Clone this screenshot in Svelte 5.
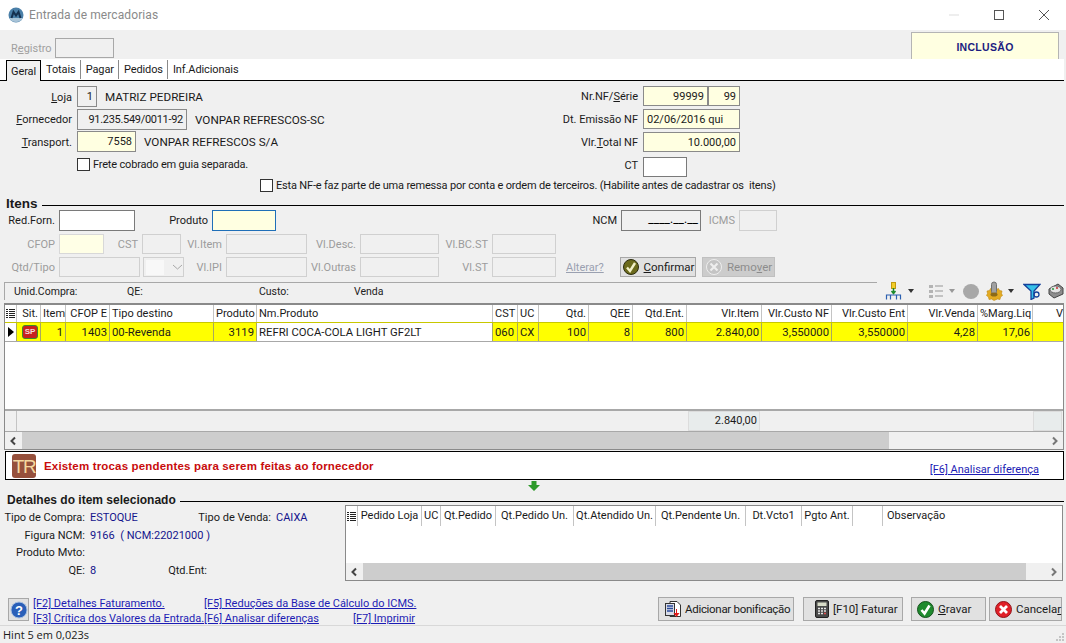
<script lang="ts">
	const itemCols = [
		{ h: 'Sit.', v: '', cls: 'r' },
		{ h: 'Item', v: '1', cls: 'r' },
		{ h: 'CFOP E', v: '1403', cls: 'r' },
		{ h: 'Tipo destino', v: '00-Revenda', cls: '' },
		{ h: 'Produto', v: '3119', cls: 'r' },
		{ h: 'Nm.Produto', v: 'REFRI COCA-COLA LIGHT GF2LT', cls: 'focus' },
		{ h: 'CST', v: '060', cls: '' },
		{ h: 'UC', v: 'CX', cls: '' },
		{ h: 'Qtd.', v: '100', cls: 'r' },
		{ h: 'QEE', v: '8', cls: 'r' },
		{ h: 'Qtd.Ent.', v: '800', cls: 'r' },
		{ h: 'Vlr.Item', v: '2.840,00', cls: 'r' },
		{ h: 'Vlr.Custo NF', v: '3,550000', cls: 'r' },
		{ h: 'Vlr.Custo Ent', v: '3,550000', cls: 'r' },
		{ h: 'Vlr.Venda', v: '4,28', cls: 'r' },
		{ h: '%Marg.Liq', v: '17,06', cls: 'r' },
		{ h: 'V', v: '', cls: 'last' }
	];

	const detailCols = [
		'Pedido Loja',
		'UC',
		'Qt.Pedido',
		'Qt.Pedido Un.',
		'Qt.Atendido Un.',
		'Qt.Pendente Un.',
		'Dt.Vcto1',
		'Pgto Ant.',
		'',
		'Observação'
	];
</script>

{#snippet colIcon()}
	<svg class="col-icon" width="9" height="11" viewBox="0 0 9 11">
		<path d="M0 1.5h2M3 1.5h6M0 3.5h2M3 3.5h6M0 5.5h2M3 5.5h6M0 7.5h2M3 7.5h6M0 9.5h2M3 9.5h6" stroke="#222" fill="none" />
	</svg>
{/snippet}

{#snippet scrollbar(cls: string)}
	<div class="scroll {cls}">
		<svg class="arrow" width="17" height="16" viewBox="0 0 17 16"><path d="M10 4.5 6.5 8l3.5 3.5" fill="none" stroke="#444" stroke-width="2" /></svg>
		<div class="thumb"></div>
		<svg class="arrow" width="17" height="16" viewBox="0 0 17 16"><path d="M7 4.5 10.5 8 7 11.5" fill="none" stroke="#777" stroke-width="2" /></svg>
	</div>
{/snippet}

<div class="window">
	<header class="titlebar">
		<svg width="16" height="16" viewBox="0 0 16 16">
			<circle cx="8" cy="8" r="7.5" fill="#4a7fa8" />
			<path d="M1 11c2 3 4 4 7 4s5-1 7-4z" fill="#a9c4d8" />
			<path d="M3.5 11 5.5 5 8 8.5 10.5 5l2 6" fill="none" stroke="#14304f" stroke-width="2" />
		</svg>
		<span class="title">Entrada de mercadorias</span>
		<div class="winbtns">
			<svg width="12" height="12" viewBox="0 0 12 12"><path d="M1 6h10" stroke="#ddd" /></svg>
			<svg width="12" height="12" viewBox="0 0 12 12"><rect x="1.5" y="1.5" width="9" height="9" fill="none" stroke="#555" /></svg>
			<svg width="12" height="12" viewBox="0 0 12 12"><path d="M1 1l10 10M11 1 1 11" stroke="#555" /></svg>
		</div>
	</header>

	<div class="topbar">
		<span class="label-off">R<u>e</u>gistro</span>
		<div class="f off reg"></div>
		<div class="mode">INCLUSÃO</div>
	</div>

	<nav class="tabs">
		<span class="tab active">Geral</span>
		<span class="tab">Totais</span>
		<span class="tab">Pagar</span>
		<span class="tab">Pedidos</span>
		<span class="tab last">Inf.Adicionais</span>
	</nav>

	<section class="head">
		<div class="head-left">
			<div class="hrow">
				<span class="hl"><u>L</u>oja</span>
				<div class="f ro loja r">1</div>
				<span class="hv">MATRIZ PEDREIRA</span>
			</div>
			<div class="hrow">
				<span class="hl"><u>F</u>ornecedor</span>
				<div class="f ro forn r">91.235.549/0011-92</div>
				<span class="hv">VONPAR REFRESCOS-SC</span>
			</div>
			<div class="hrow">
				<span class="hl"><u>T</u>ransport.</span>
				<div class="f req transp r">7558</div>
				<span class="hv">VONPAR REFRESCOS S/A</span>
			</div>
			<label class="check frete"><span class="box"></span>Frete cobrado em guia separada.</label>
		</div>
		<div class="head-right">
			<div class="nrow">
				<span class="nl">Nr.NF/<u>S</u>érie</span>
				<div class="f req nf r">99999</div>
				<div class="f req serie r">99</div>
			</div>
			<div class="nrow">
				<span class="nl">Dt. Emissão NF</span>
				<div class="f req full">02/06/2016 qui</div>
			</div>
			<div class="nrow">
				<span class="nl">Vlr.<u>T</u>otal NF</span>
				<div class="f req full r">10.000,00</div>
			</div>
			<div class="nrow">
				<span class="nl">CT</span>
				<div class="f ct"></div>
			</div>
		</div>
	</section>
	<label class="check remessa"><span class="box"></span>Esta NF-e faz parte de uma remessa por conta e ordem de terceiros. (Habilite antes de cadastrar os&nbsp; itens)</label>

	<div class="section-title items-title"><strong>Itens</strong><i></i></div>

	<div class="irow red">
		<span class="il">Red.Forn.</span><div class="f"></div>
		<span class="il">Produto</span><div class="f req focusf"></div>
		<span class="il">NCM</span><div class="f mask">____.__.__</div>
		<span class="il dis">ICMS</span><div class="f off"></div>
	</div>
	<div class="irow cfop">
		<span class="il dis">CFOP</span><div class="f off-y"></div>
		<span class="il dis">CST</span><div class="f off"></div>
		<span class="il dis">Vl.Item</span><div class="f off"></div>
		<span class="il dis">Vl.Desc.</span><div class="f off"></div>
		<span class="il dis">Vl.BC.ST</span><div class="f off"></div>
	</div>
	<div class="irow qtd">
		<span class="il dis">Qtd/Tipo</span><div class="f off"></div>
		<span></span>
		<div class="f off combo">
			<i></i>
			<svg width="11" height="6" viewBox="0 0 11 6"><path d="M1 1l4.500 4L10 1" fill="none" stroke="#a8a8a8" /></svg>
		</div>
		<span class="il dis">Vl.IPI</span><div class="f off"></div>
		<span class="il dis">Vl.Outras</span><div class="f off"></div>
		<span class="il dis">Vl.ST</span><div class="f off"></div>
		<span class="alterar">Alterar?</span>
		<button class="btn small">
			<svg width="18" height="18" viewBox="0 0 18 18">
				<circle cx="9" cy="9" r="7.500" fill="#6b6a1c" stroke="#2c2c10" />
				<path d="M5 9.500 8 13l5-8" fill="none" stroke="#f2f0c8" stroke-width="2.400" />
			</svg>
			<span><u>C</u>onfirmar</span>
		</button>
		<button class="btn small disabled">
			<svg width="18" height="18" viewBox="0 0 18 18">
				<circle cx="9" cy="9" r="7.500" fill="#c4c4c4" stroke="#eee" />
				<path d="M5.500 5.500l7 7m0-7-7 7" stroke="#eee" stroke-width="2.200" />
			</svg>
			<span>Remo<u>v</u>er</span>
		</button>
	</div>

	<div class="infobar">
		<div class="info">
			<span class="i1">Unid.Compra:</span>
			<span class="i2">QE:</span>
			<span class="i3">Custo:</span>
			<span class="i4">Venda</span>
		</div>
		<div class="tools">
			<svg class="t1" width="18" height="18" viewBox="0 0 18 18">
				<rect x="6.500" y="0.500" width="4" height="6" fill="#f3cd28" stroke="#c09a10" />
				<path d="M8.500 6v5M6.500 9l2 2.500 2-2.500" fill="none" stroke="#1c8a2c" stroke-width="1.500" />
				<path d="M1.500 17.500V13h14v4.500M5.500 17.500V13M11.500 17.500V13" fill="none" stroke="#2a5fb0" stroke-width="1.200" />
			</svg>
			<i class="caret"></i>
			<svg class="t2" width="16" height="16" viewBox="0 0 16 16">
				<path d="M1 2h4v3H1zM1 7h4v3H1zM1 12h4v3H1z" fill="#b4b4b4" />
				<path d="M7 3h8M7 8h8M7 13h8" stroke="#b4b4b4" stroke-width="1.600" />
			</svg>
			<i class="caret light"></i>
			<span class="dot"></span>
			<svg class="t3" width="18" height="20" viewBox="0 0 18 20">
				<path d="M9 7l2 1.500 2.500-1 1 2 2.500.5-.5 2.500 1 2-2 1.500-.5 2.500-2.500-.5L9 19.500 6.500 18 4 18.500 3.500 16l-2-1.500 1-2L2 10l2.500-.5 1-2 2 1z" fill="#e3ab22" stroke="#c08a14" stroke-width=".6" />
				<rect x="6.500" y="1" width="5" height="12" rx="2.500" fill="#a0a0a0" stroke="#707070" />
				<ellipse cx="9" cy="13.500" rx="3.500" ry="2" fill="#8c6a18" />
			</svg>
			<i class="caret"></i>
			<svg class="t4" width="18" height="17" viewBox="0 0 18 17">
				<path d="M1 1.500h16L11 8v7l-3 1.500V8z" fill="#35c0e8" stroke="#14409a" stroke-width="1.300" />
				<circle cx="13.500" cy="11.500" r="2.500" fill="none" stroke="#14409a" stroke-width="1.300" />
			</svg>
			<svg class="t5" width="16" height="16" viewBox="0 0 16 16">
				<path d="M1 6 10 1l5 4v6l-9 4-5-4z" fill="#8d8d8d" stroke="#444" />
				<ellipse cx="7.500" cy="6.500" rx="5.500" ry="3.500" fill="#e4e4e4" stroke="#666" />
				<circle cx="5" cy="6" r="1" fill="#2a9a3a" />
				<circle cx="9" cy="5" r="1" fill="#c83030" />
			</svg>
		</div>
	</div>

	<div class="grid">
		<div class="grow ghead">
			<div class="gc mark">{@render colIcon()}</div>
			{#each itemCols as c}
				<div class="gc {c.cls === 'focus' ? '' : c.cls}">{c.h}</div>
			{/each}
		</div>
		<div class="grow gdata">
			<div class="gc mark white">
				<svg width="6" height="10" viewBox="0 0 6 10"><path d="M0 0l6 5-6 5z" fill="#000" /></svg>
			</div>
			{#each itemCols as c, i}
				<div class="gc {c.cls}">
					{#if i === 0}
						<span class="sp">SP</span>
					{:else}
						{c.v}
					{/if}
				</div>
			{/each}
		</div>
		<div class="gempty"></div>
		<div class="gfoot">
			<i class="fmark"></i>
			<span class="ftotal">2.840,00</span>
			<span class="fend"></span>
		</div>
		{@render scrollbar('main')}
	</div>

	<div class="banner">
		<span class="tr">TR</span>
		<strong>Existem trocas pendentes para serem feitas ao fornecedor</strong>
		<a class="lnk" href="#f6">[F6] Analisar diferença</a>
	</div>

	<div class="splitter">
		<svg width="12" height="10" viewBox="0 0 12 10"><path d="M3.500 0h5v4H12L6 10 0 4h3.500z" fill="#2e9a2a" /></svg>
	</div>

	<div class="section-title detail-title"><strong>Detalhes do item selecionado</strong><i></i></div>

	<section class="detail">
		<div class="dleft">
			<div class="drow"><span class="dl">Tipo de Compra:</span><span class="dv w1">ESTOQUE</span><span class="dl2">Tipo de Venda:</span><span class="dv">CAIXA</span></div>
			<div class="drow"><span class="dl">Figura NCM:</span><span class="dv">9166&nbsp; ( NCM:22021000 )</span></div>
			<div class="drow"><span class="dl">Produto Mvto:</span></div>
			<div class="drow"><span class="dl">QE:</span><span class="dv w1">8</span><span class="dl2">Qtd.Ent:</span></div>
		</div>
		<div class="dgrid">
			<div class="dhead">
				<div class="gc mark">{@render colIcon()}</div>
				{#each detailCols as c}
					<div class="gc">{c}</div>
				{/each}
			</div>
			<div class="dbody"></div>
			{@render scrollbar('sub')}
		</div>
	</section>

	<footer class="actions">
		<button class="help" aria-label="Ajuda">
			<svg width="18" height="18" viewBox="0 0 18 18">
				<circle cx="9" cy="9" r="8" fill="#2a5fb8" stroke="#a8c0e0" />
				<text x="9" y="13.500" text-anchor="middle" font-size="13" font-weight="700" font-family="Liberation Sans" fill="#fff">?</text>
			</svg>
		</button>
		<div class="links">
			<a class="lnk" href="#f2">[F2] Detalhes Faturamento.</a>
			<a class="lnk span" href="#f5">[F5] Reduções da Base de Cálculo do ICMS.</a>
			<a class="lnk" href="#f3">[F3] Crítica dos Valores da Entrada.</a>
			<a class="lnk" href="#f6">[F6] Analisar diferenças</a>
			<a class="lnk" href="#f7">[F7] Imprimir</a>
		</div>
		<div class="buttons">
			<button class="btn b1">
				<svg width="17" height="18" viewBox="0 0 17 18">
					<path d="M5 1.500h7l3.500 3.500v11.500H5z" fill="#fff" stroke="#333" />
					<rect x="0.500" y="3.500" width="9" height="12" fill="#d8dce8" stroke="#333" />
					<path d="M2 6h6M2 8.500h6M2 11h6" stroke="#2a4a9a" stroke-width="1.400" />
					<path d="M12 9v4h2.500L11.500 17l-3-4H11V9z" fill="#e01818" />
				</svg>
				<span>Adicionar bonificação</span>
			</button>
			<button class="btn b2">
				<svg width="14" height="18" viewBox="0 0 14 18">
					<rect x="0.500" y="0.500" width="13" height="17" rx="1.500" fill="#4a4a4a" stroke="#222" />
					<rect x="2.500" y="2.500" width="9" height="3.500" fill="#d8dcc8" />
					<path d="M3 8.500h2M6 8.500h2M9 8.500h2M3 11h2M6 11h2M9 11h2M3 13.500h2M6 13.500h2" stroke="#e8e8e8" stroke-width="1.400" />
					<path d="M9 13.500h2" stroke="#e05050" stroke-width="1.400" />
				</svg>
				<span>[F10] Faturar</span>
			</button>
			<button class="btn b3">
				<svg width="17" height="17" viewBox="0 0 17 17">
					<circle cx="8.500" cy="8.500" r="8" fill="#1f8a2e" stroke="#14501c" />
					<path d="M4.500 9 7.500 12.500 12.500 4.500" fill="none" stroke="#fff" stroke-width="2.600" />
				</svg>
				<span><u>G</u>ravar</span>
			</button>
			<button class="btn b4">
				<svg width="17" height="17" viewBox="0 0 17 17">
					<circle cx="8.500" cy="8.500" r="8" fill="#e02028" stroke="#90141a" />
					<path d="M5 5l7 7m0-7-7 7" stroke="#fff" stroke-width="2.800" />
				</svg>
				<span>Cancela<u>r</u></span>
			</button>
		</div>
	</footer>

	<div class="status">
		Hint 5 em 0,023s
		<svg class="grip" width="10" height="10" viewBox="0 0 10 10"><path d="M7 1h2v2H7zM4 4h2v2H4zM7 4h2v2H7zM1 7h2v2H1zM4 7h2v2H4zM7 7h2v2H7z" fill="#c4c4c4" /></svg>
	</div>
</div>

<style>
	:global(body) {
		margin: 0;
		background: #f0f0f0;
	}

	.window {
		width: 1066px;
		height: 643px;
		overflow: hidden;
		display: flex;
		flex-direction: column;
		background: #f0f0f0;
		font-family: Roboto, 'Liberation Sans', Arial, sans-serif;
		font-size: 11px;
		color: #1a1a1a;
	}

	u {
		text-underline-offset: 1px;
	}

	.titlebar {
		height: 30px;
		flex: none;
		background: #fff;
		display: flex;
		align-items: center;
		padding-left: 8px;
		gap: 5px;
	}

	.title {
		font-size: 12px;
		color: #8a8a8a;
		letter-spacing: 0.1px;
	}

	.winbtns {
		margin-left: auto;
		display: flex;
		gap: 33px;
		padding-right: 16px;
	}

	.topbar {
		height: 29px;
		flex: none;
		display: flex;
		align-items: flex-end;
		padding-left: 11px;
	}

	.label-off {
		color: #a0a0a0;
		width: 44px;
		align-self: center;
		padding-top: 7px;
	}

	.f {
		box-sizing: border-box;
		height: 21px;
		background: #fff;
		border: 1px solid #7a7a7a;
		padding: 0 3px;
		line-height: 19px;
		white-space: nowrap;
		overflow: hidden;
	}

	.f.r {
		text-align: right;
	}

	.f.off {
		background: #f0f0f0;
		border-color: #d0d0d0;
	}

	.f.off-y {
		background: #ffffe6;
		border-color: #d8d8d8;
	}

	.f.ro {
		background: #f0f0f0;
		border-color: #8a8a8a;
	}

	.f.req {
		background: #ffffe1;
		border-color: #8a8a8a;
	}

	.f.reg {
		width: 59px;
		height: 20px;
		margin-bottom: 1px;
		border-color: #a8a8a8;
	}

	.mode {
		box-sizing: border-box;
		margin-left: auto;
		margin-right: 7px;
		width: 148px;
		height: 27px;
		background: #ffffe1;
		border: 1px solid #b4b4b4;
		border-bottom: 0;
		color: #1c1c80;
		font-family: 'Liberation Sans', Arial, sans-serif;
		font-size: 10.500px;
		font-weight: 700;
		letter-spacing: 0.3px;
		text-align: center;
		line-height: 29px;
	}

	.tabs {
		box-sizing: border-box;
		height: 22px;
		flex: none;
		width: 1064px;
		background: #fff;
		border-bottom: 1px solid #000;
		display: flex;
		align-items: flex-end;
		padding-left: 6px;
		letter-spacing: -0.1px;
	}

	.tab {
		height: 19px;
		line-height: 20px;
		padding: 0 4px 0 5px;
		margin-bottom: 1px;
		border-right: 1px solid #8a8a8a;
	}

	.tab.last {
		border-right: 0;
	}

	.tab.active {
		box-sizing: border-box;
		height: 21px;
		width: 35px;
		margin-bottom: -1px;
		background: #f0f0f0;
		border: 1px solid #000;
		border-bottom: 0;
		padding: 0 0 0 4px;
		line-height: 22px;
	}

	.head {
		height: 97px;
		flex: none;
		box-sizing: border-box;
		padding-top: 5px;
		display: flex;
	}

	.head-left {
		width: 643px;
		display: flex;
		flex-direction: column;
	}

	.hrow {
		height: 21px;
		display: flex;
		align-items: center;
		margin-bottom: 1.500px;
	}

	.hl {
		width: 72px;
		margin-right: 5px;
		padding-top: 1px;
		text-align: right;
	}

	.hv {
		margin-left: 8px;
		padding-top: 1px;
		font-size: 11.700px;
	}

	.f.loja {
		width: 20px;
	}

	.f.forn {
		width: 110px;
		letter-spacing: -0.3px;
	}

	.f.transp {
		width: 59px;
	}

	.check {
		display: flex;
		align-items: center;
		gap: 3px;
		height: 14px;
		letter-spacing: -0.18px;
	}

	.box {
		box-sizing: border-box;
		width: 13px;
		height: 13px;
		background: #fff;
		border: 1px solid #333;
	}

	.frete {
		margin: 4px 0 0 77px;
	}

	.remessa {
		margin-left: 260px;
		flex: none;
	}

	.head-right {
		display: flex;
		flex-direction: column;
		gap: 3px;
	}

	.nrow {
		height: 20px;
		display: flex;
		align-items: center;
		position: relative;
	}

	.nl {
		position: absolute;
		right: 100%;
		margin-right: 5px;
		white-space: nowrap;
	}

	.f.nf {
		width: 66px;
		height: 20px;
		border-right-width: 2px;
	}

	.f.serie {
		width: 31px;
		height: 20px;
		border-left: 0;
	}

	.f.full {
		width: 97px;
		height: 20px;
	}

	.f.ct {
		width: 44px;
		height: 20px;
		margin-top: 4px;
	}

	.section-title {
		display: flex;
		flex: none;
		align-items: center;
		gap: 4px;
		box-sizing: border-box;
		font-family: 'Liberation Sans', Arial, sans-serif;
	}

	.section-title i {
		flex: 1;
		height: 1px;
		background: #000;
		margin-right: 2px;
		margin-top: 3px;
	}

	.items-title {
		height: 14px;
		margin-top: 4px;
		padding-left: 6px;
		padding-top: 1px;
		font-size: 13.500px;
	}

	.irow {
		display: grid;
		flex: none;
		height: 20px;
		align-items: center;
	}

	.il {
		text-align: right;
		padding-right: 4px;
		white-space: nowrap;
	}

	.dis {
		color: #9c9c9c;
	}

	.irow .f {
		height: 100%;
	}

	.red {
		height: 21px;
		grid-template-columns: 59px 76px 77px 64px 345px 80px 38px 38px;
	}

	.focusf {
		border-color: #1f6fb8 !important;
	}

	.mask {
		text-align: right;
		color: #000;
		font-size: 12px;
		line-height: 16px;
		padding-right: 2px;
		border-color: #7a7a7a;
		background: #f0f0f0;
	}

	.cfop {
		margin-top: 3px;
		grid-template-columns: 59px 45px 38px 39px 45px 81px 53px 79px 53px 64px;
	}

	.qtd {
		margin-top: 3px;
		grid-template-columns: 59px 81px 3px 41px 42px 81px 53px 79px 53px 64px 64px 76px 73px;
	}

	.combo {
		display: flex;
		align-items: center;
		padding: 0;
	}

	.combo i {
		width: 18px;
		height: 15px;
		margin-left: 2px;
		background: #f8f8f8;
	}

	.combo svg {
		margin-left: 8px;
	}

	.alterar {
		color: #9aa0b0;
		text-decoration: underline;
		padding-left: 10px;
	}

	.btn {
		box-sizing: border-box;
		height: 24px;
		padding: 0;
		display: flex;
		align-items: center;
		justify-content: center;
		gap: 4px;
		background: #e1e1e1;
		border: 1px solid #a8a8a8;
		font: inherit;
		color: #1a1a1a;
		white-space: nowrap;
	}

	.btn svg {
		flex: none;
	}

	.btn.small {
		height: 20px;
		font-size: 11.500px;
	}

	.btn.small + .btn.small {
		margin-left: 6px;
		width: 73px;
	}

	.btn.disabled {
		background: #cccccc;
		color: #8c8c8c;
		border-color: #c0c0c0;
	}

	.infobar {
		display: flex;
		flex: none;
		height: 18px;
		margin: 5px 0 3px 4px;
	}

	.info {
		box-sizing: border-box;
		width: 873px;
		border: 1px solid #a8a8a8;
		border-width: 1px 0 0 1px;
		display: flex;
		align-items: center;
		font-size: 10.500px;
		color: #222;
	}

	.i1 {
		margin-left: 9px;
		width: 113px;
	}

	.i2 {
		width: 132px;
	}

	.i3 {
		width: 95px;
	}

	.tools {
		display: flex;
		align-items: center;
		padding-left: 8px;
	}

	.caret {
		width: 0;
		height: 0;
		margin: 0 8px 0 5px;
		border: 3px solid transparent;
		border-top: 4px solid #333;
		border-bottom: 0;
	}

	.caret.light {
		border-top-color: #999;
	}

	.t2 {
		margin-left: 6px;
	}

	.dot {
		width: 16px;
		height: 15px;
		border-radius: 50%;
		background: #a8a8a8;
		margin-right: 6px;
	}

	.t4 {
		margin: 0 7px 0 1px;
	}

	.grid {
		box-sizing: border-box;
		flex: none;
		width: 1060px;
		height: 147px;
		margin-left: 4px;
		border: 1px solid #8a8a8a;
		border-top-width: 2px;
		background: #fff;
		display: flex;
		flex-direction: column;
		overflow: hidden;
	}

	.grow {
		display: grid;
		flex: none;
		grid-template-columns: 12px 24px 25px 44px 104px 43px 236px 25px 21px 50px 44px 54px 75px 70px 76px 70px 55px 30px;
		width: 1058px;
	}

	.gc {
		box-sizing: border-box;
		padding: 0 2px;
		white-space: nowrap;
		overflow: hidden;
		border-right: 1px solid #c4c4c4;
	}

	.gc.r {
		text-align: right;
	}

	.gc.last {
		border-right: 0;
		text-align: right;
		padding-right: 0;
	}

	.ghead {
		height: 17px;
		line-height: 17px;
	}

	.gdata {
		height: 20px;
		line-height: 19px;
		font-size: 11.300px;
		background: #ffff00;
		border-top: 1px solid #c8c800;
		border-bottom: 1px solid #a8a8a8;
		box-sizing: border-box;
	}

	.gdata .gc {
		border-right-color: #a8a860;
	}

	.gc.focus {
		background: #fff;
	}

	.gc.white {
		background: #fff;
	}

	.gc.mark {
		display: flex;
		align-items: center;
		justify-content: center;
		padding: 0;
	}

	.sp {
		display: block;
		width: 16px;
		height: 14px;
		margin: 2px 0 0 3px;
		box-sizing: border-box;
		background: #c82020;
		border: 1px solid #3c8a2c;
		border-radius: 3px;
		color: #f4d8d8;
		font-family: 'Liberation Sans', Arial, sans-serif;
		font-size: 8px;
		font-weight: 700;
		line-height: 12px;
		text-align: center;
	}

	.gempty {
		flex: 1;
	}

	.gfoot {
		height: 23px;
		flex: none;
		box-sizing: border-box;
		border-top: 2px solid #a8a8a8;
		border-bottom: 1px solid #a8a8a8;
		background: #f0f0f0;
		display: flex;
	}

	.fmark {
		width: 11px;
		border-right: 1px solid #c4c4c4;
	}

	.ftotal {
		box-sizing: border-box;
		width: 72px;
		margin-left: 671px;
		background: #e8ecec;
		border: 1px solid #dcdcdc;
		text-align: right;
		padding-right: 2px;
		line-height: 18px;
	}

	.fend {
		box-sizing: border-box;
		width: 29px;
		margin-left: 273px;
		background: #e8ecec;
		border: 1px solid #dcdcdc;
	}

	.scroll {
		display: flex;
		align-items: center;
		height: 17px;
		flex: none;
		background: #f0f0f0;
	}

	.thumb {
		align-self: stretch;
		background: #cdcdcd;
	}

	.arrow {
		flex: none;
	}

	.scroll.main .thumb {
		width: 867px;
		margin-right: auto;
	}

	.scroll.sub .thumb {
		width: 663px;
		margin-right: auto;
	}

	.banner {
		box-sizing: border-box;
		flex: none;
		width: 1059px;
		height: 29px;
		margin: 1px 0 0 5px;
		background: #fff;
		border: 1px solid #000;
		display: flex;
		align-items: center;
		padding-left: 6px;
	}

	.tr {
		width: 24px;
		height: 24px;
		border-radius: 3px;
		background: #96503c;
		color: #f4d8a0;
		font-family: 'Liberation Sans', Arial, sans-serif;
		font-size: 19px;
		line-height: 25px;
		text-align: center;
		letter-spacing: -1.500px;
		overflow: hidden;
	}

	.banner strong {
		margin-left: 8px;
		color: #c80c0c;
		font-family: 'Liberation Sans', Arial, sans-serif;
		font-size: 11.500px;
		letter-spacing: 0.17px;
	}

	.banner .lnk {
		margin-left: auto;
		margin-right: 24px;
		align-self: flex-end;
		margin-bottom: 3px;
	}

	.lnk {
		color: #1c1cb4;
		text-decoration: underline;
		white-space: nowrap;
	}

	.splitter {
		height: 15px;
		flex: none;
		display: flex;
		justify-content: center;
		padding-top: 1px;
		box-sizing: border-box;
		padding-left: 2px;
	}

	.detail-title {
		height: 10px;
		padding-left: 7px;
		font-size: 12px;
	}

	.detail {
		display: flex;
		flex: none;
		height: 76px;
	}

	.dleft {
		width: 345px;
		padding-top: 4px;
		box-sizing: border-box;
	}

	.drow {
		display: flex;
		height: 17.500px;
		align-items: center;
	}

	.dl {
		width: 85px;
		margin-right: 5px;
		text-align: right;
		white-space: nowrap;
	}

	.dl2 {
		width: 106px;
		text-align: right;
		white-space: nowrap;
		margin-right: 5px;
	}

	.drow .dl2:last-child {
		width: 45px;
	}

	.dv {
		color: #14148c;
		white-space: nowrap;
	}

	.w1 {
		width: 75px;
	}

	.drow:last-child .w1 {
		width: 72px;
	}

	.dgrid {
		box-sizing: border-box;
		width: 718px;
		border: 1px solid #8a8a8a;
		background: #fff;
		display: flex;
		flex-direction: column;
	}

	.dhead {
		display: grid;
		grid-template-columns: 12px 64px 19px 55px 78px 82px 90px 56px 51px 30px 170px;
		height: 20px;
		line-height: 20px;
		flex: none;
		text-align: center;
	}

	.dhead .gc:last-child {
		border-right: 0;
		text-align: left;
		padding-left: 4px;
	}

	.dbody {
		flex: 1;
	}

	.actions {
		height: 24px;
		flex: none;
		margin-top: 16px;
		display: flex;
		padding-left: 8px;
	}

	.help {
		box-sizing: border-box;
		width: 21px;
		height: 23px;
		margin-top: 1px;
		padding: 0;
		background: #e1e1e1;
		border: 1px solid #a8a8a8;
		display: flex;
		align-items: center;
		justify-content: center;
	}

	.links {
		display: grid;
		grid-template-columns: 171px 149px auto;
		grid-auto-rows: 15px;
		margin-left: 4px;
		line-height: 15px;
		position: relative;
		top: -1px;
	}

	.links .span {
		grid-column: span 2;
	}

	.buttons {
		margin-left: auto;
		margin-right: 4px;
		display: flex;
		font-size: 11.500px;
	}

	.b1 {
		width: 136px;
		justify-content: flex-start;
		padding-left: 6px;
		gap: 3px;
		letter-spacing: -0.3px;
	}

	.b2 {
		width: 100px;
		margin-left: 9px;
		gap: 4px;
		justify-content: flex-start;
		padding-left: 11px;
	}

	.b3 {
		width: 75px;
		margin-left: 8px;
		justify-content: flex-start;
		padding-left: 5px;
		gap: 4px;
	}

	.b4 {
		width: 73px;
		margin-left: 3px;
		justify-content: flex-start;
		padding-left: 5px;
		gap: 4px;
	}

	.status {
		box-sizing: border-box;
		height: 17px;
		flex: none;
		margin-top: 4px;
		border-top: 1px solid #d8d8d8;
		padding-left: 3px;
		line-height: 17px;
		font-family: 'Open Sans', sans-serif;
		font-size: 11px;
		display: flex;
		justify-content: space-between;
	}

	.grip {
		align-self: flex-end;
		margin-right: 1px;
	}

	.col-icon {
		display: block;
	}
</style>
